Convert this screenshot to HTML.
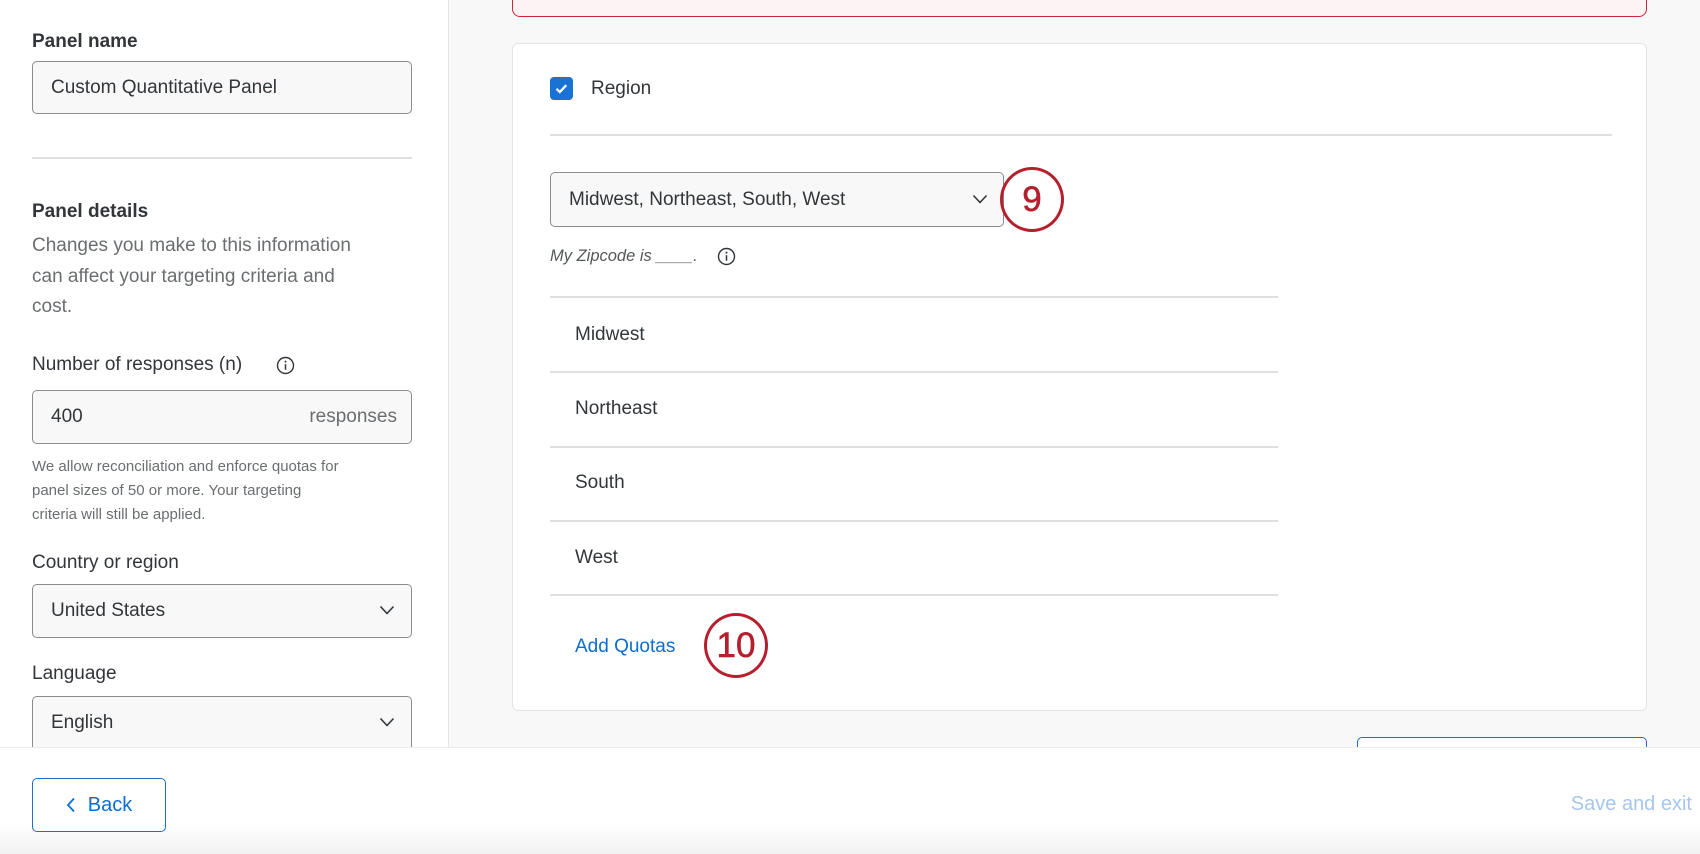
<!DOCTYPE html>
<html><head><meta charset="utf-8"><style>
*{box-sizing:border-box;margin:0;padding:0}
body{width:1700px;height:854px;overflow:hidden;background:#f8f8f8;font-family:"Liberation Sans",sans-serif;color:#32363a;position:relative}
.abs{position:absolute}
.left{left:0;top:0;width:449px;height:747px;background:#fff;border-right:1px solid #e6e6e6}
.lbl{font-size:19px;color:#32363a;white-space:nowrap}
.b{font-weight:bold}
.inp{border:1.5px solid #8a8c8f;border-radius:5px;background:#f8f8f8;font-size:19px;padding-left:18px;display:flex;align-items:center}
.gray{color:#6b6e71}
.chev{position:absolute;right:16px;top:50%;margin-top:-6px}
.card{left:512px;top:43px;width:1135px;height:668px;background:#fff;border:1px solid #e4e4e4;border-radius:6px}
.line{height:1.5px;background:#e0e0e0}
.circ{border:3.5px solid #b5202e;border-radius:50%;color:#b5202e;font-size:35px;display:flex;align-items:center;justify-content:center;-webkit-text-stroke:0.6px #b5202e}
</style></head><body>
<div class="abs" style="left:512px;top:-10px;width:1135px;height:27px;border:1.5px solid #c9283a;border-radius:8px;background:#fdf3f4"></div>

<div class="abs left">
 <div class="abs lbl b" style="left:32px;top:31px">Panel name</div>
 <div class="abs inp" style="left:32px;top:61px;width:380px;height:53px">Custom Quantitative Panel</div>
 <div class="abs line" style="left:32px;top:157px;width:380px"></div>
 <div class="abs lbl b" style="left:32px;top:201px">Panel details</div>
 <div class="abs gray" style="left:32px;top:231px;width:420px;font-size:19px;line-height:30.5px;white-space:nowrap">Changes you make to this information<br>can affect your targeting criteria and<br>cost.</div>
 <div class="abs lbl" style="left:32px;top:354px">Number of responses (n)</div>
 <svg class="abs" style="left:276px;top:356px" width="19" height="19" viewBox="0 0 19 19"><circle cx="9.5" cy="9.5" r="8" fill="none" stroke="#32363a" stroke-width="1.4"/><circle cx="9.5" cy="5.6" r="1" fill="#32363a"/><path d="M9.5 8.2v5.5" stroke="#32363a" stroke-width="1.5"/></svg>
 <div class="abs inp" style="left:32px;top:390px;width:380px;height:54px">400<span class="gray" style="position:absolute;right:14px">responses</span></div>
 <div class="abs gray" style="left:32px;top:455px;width:420px;font-size:15px;line-height:24px;white-space:nowrap">We allow reconciliation and enforce quotas for<br>panel sizes of 50 or more. Your targeting<br>criteria will still be applied.</div>
 <div class="abs lbl" style="left:32px;top:552px">Country or region</div>
 <div class="abs inp" style="left:32px;top:584px;width:380px;height:54px">United States<svg class="chev" width="16" height="10" viewBox="0 0 16 10"><path d="M1.5 1.5l6.5 7 6.5-7" fill="none" stroke="#32363a" stroke-width="1.6"/></svg></div>
 <div class="abs lbl" style="left:32px;top:663px">Language</div>
 <div class="abs inp" style="left:32px;top:696px;width:380px;height:60px;padding-bottom:6px">English<svg class="chev" style="margin-top:-9px" width="16" height="10" viewBox="0 0 16 10"><path d="M1.5 1.5l6.5 7 6.5-7" fill="none" stroke="#32363a" stroke-width="1.6"/></svg></div>
</div>

<div class="abs card">
 <div class="abs" style="left:37px;top:33px;width:23px;height:23px;background:#1a73d4;border-radius:4px"><svg width="23" height="23" viewBox="0 0 23 23"><path d="M6.5 11.8l3.3 3.2 6.5-6.8" fill="none" stroke="#fff" stroke-width="2.3"/></svg></div>
 <div class="abs lbl" style="left:78px;top:34px">Region</div>
 <div class="abs line" style="left:37px;top:90px;width:1062px"></div>
 <div class="abs inp" style="left:37px;top:128px;width:454px;height:55px;background:#f8f8f8">Midwest, Northeast, South, West<svg class="chev" style="right:15px" width="16" height="10" viewBox="0 0 16 10"><path d="M1.5 1.5l6.5 7 6.5-7" fill="none" stroke="#32363a" stroke-width="1.6"/></svg></div>
 <div class="abs circ" style="left:487px;top:123px;width:64px;height:65px">9</div>
 <div class="abs gray" style="left:37px;top:203px;font-size:16.5px;font-style:italic;color:#55585b">My Zipcode is ____.</div>
 <svg class="abs" style="left:204px;top:203px" width="19" height="19" viewBox="0 0 19 19"><circle cx="9.5" cy="9.5" r="8" fill="none" stroke="#32363a" stroke-width="1.4"/><circle cx="9.5" cy="5.6" r="1" fill="#32363a"/><path d="M9.5 8.2v5.5" stroke="#32363a" stroke-width="1.5"/></svg>
 <div class="abs line" style="left:37px;top:252px;width:728px"></div>
 <div class="abs lbl" style="left:62px;top:280px">Midwest</div>
 <div class="abs line" style="left:37px;top:327px;width:728px"></div>
 <div class="abs lbl" style="left:62px;top:354px">Northeast</div>
 <div class="abs line" style="left:37px;top:402px;width:728px"></div>
 <div class="abs lbl" style="left:62px;top:428px">South</div>
 <div class="abs line" style="left:37px;top:476px;width:728px"></div>
 <div class="abs lbl" style="left:62px;top:503px">West</div>
 <div class="abs line" style="left:37px;top:550px;width:728px"></div>
 <div class="abs lbl" style="left:62px;top:592px;color:#0b6ed0">Add Quotas</div>
 <div class="abs circ" style="left:191px;top:569px;width:64px;height:65px">10</div>
</div>

<div class="abs" style="left:1357px;top:737px;width:290px;height:20px;border:1.5px solid #1a6fc9;border-radius:5px;background:#fff"></div>

<div class="abs" style="left:0;top:747px;width:1700px;height:107px;background:linear-gradient(#fff 0,#fff 75px,#f1f1f1 107px);border-top:1.5px solid #ececec"></div>
<div class="abs" style="left:32px;top:778px;width:134px;height:54px;border:1.5px solid #1a6fc9;border-radius:5px;background:#fff;color:#0b6ed0;font-size:20px;display:flex;align-items:center;justify-content:center;gap:12px">
 <svg width="10" height="16" viewBox="0 0 10 16"><path d="M8 1.5L2 8l6 6.5" fill="none" stroke="#0b6ed0" stroke-width="1.8"/></svg>Back</div>
<div class="abs" style="right:8px;top:793px;font-size:20px;color:#a7c6ea">Save and exit</div>
</body></html>
